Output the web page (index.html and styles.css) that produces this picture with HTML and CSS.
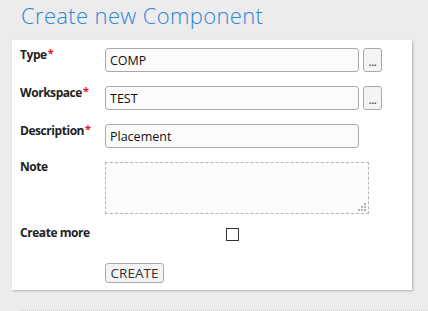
FILE: index.html
```html
<!DOCTYPE html>
<html>
<head>
<meta charset="utf-8">
<link rel="stylesheet" href="styles.css">
</head>
<body>
<h1 class="title">Create new Component</h1>
<div class="card">
  <form class="form">
    <label class="lbl">Type<span class="req">*</span></label>
    <div class="field">
      <input class="inp" type="text" value="COMP">
      <button type="button" class="dots">...</button>
    </div>
    <label class="lbl">Workspace<span class="req">*</span></label>
    <div class="field">
      <input class="inp" type="text" value="TEST">
      <button type="button" class="dots">...</button>
    </div>
    <label class="lbl">Description<span class="req">*</span></label>
    <div class="field">
      <input class="inp" type="text" value="Placement">
    </div>
    <label class="lbl">Note</label>
    <div class="field">
      <div class="note-wrap">
        <textarea class="note"></textarea>
        <svg class="grip" width="9" height="9" viewBox="0 0 9 9">
          <rect x="6" y="0" width="2" height="2" fill="#b5b5b5"/>
          <rect x="3" y="3" width="2" height="2" fill="#b5b5b5"/>
          <rect x="6" y="3" width="2" height="2" fill="#b5b5b5"/>
          <rect x="0" y="6" width="2" height="2" fill="#b5b5b5"/>
          <rect x="3" y="6" width="2" height="2" fill="#b5b5b5"/>
          <rect x="6" y="6" width="2" height="2" fill="#b5b5b5"/>
        </svg>
      </div>
    </div>
    <label class="lbl">Create more</label>
    <div class="field check-field">
      <span class="check"></span>
    </div>
    <div></div>
    <div class="field create-field">
      <button type="button" class="create">CREATE</button>
    </div>
  </form>
</div>
<div class="footer"></div>
</body>
</html>
```

FILE: styles.css
```css
html, body {
  margin: 0;
  padding: 0;
  background: #ececec;
  font-family: "Open Sans", "Noto Sans", sans-serif;
  color: #222;
}
.title {
  margin: 0;
  padding: 0 0 0 21px;
  height: 40px;
  font-size: 22px;
  font-weight: 300;
  letter-spacing: 0.35px;
  line-height: 30px;
  color: #2e86d4;
}
.card {
  margin-left: 12px;
  width: 400px;
  height: 250px;
  box-sizing: border-box;
  background: #fff;
  padding: 8px 0 0 8px;
  box-shadow: 1px 1px 2px rgba(0,0,0,0.25);
}
.form {
  display: grid;
  grid-template-columns: 85px 1fr;
  grid-template-rows: 24px 24px 24px 52px 13px 20px;
  row-gap: 14px;
  margin: 0;
}
.create-field {
  margin-top: 8px;
}
.lbl {
  font-size: 12px;
  font-weight: 700;
  letter-spacing: -0.45px;
  line-height: 16px;
  margin-top: -3px;
  color: #222;
  white-space: nowrap;
}
.req {
  color: #e8101c;
  font-size: 11px;
  vertical-align: 2px;
  margin-left: 1px;
}
.field {
  display: flex;
  gap: 4px;
  align-items: flex-start;
}
.inp {
  width: 254px;
  height: 24px;
  box-sizing: border-box;
  border: 1px solid #aaa;
  border-radius: 3px;
  background: #fbfbfb;
  padding: 0 4px;
  margin: 0;
  font-family: inherit;
  font-size: 12.5px;
  color: #111;
}
.dots {
  width: 19px;
  height: 24px;
  box-sizing: border-box;
  border: 1px solid #aaa;
  border-radius: 3px;
  background: #f4f4f4;
  padding: 4px 0 0;
  margin: 0;
  font-family: inherit;
  font-size: 12px;
  line-height: 12px;
  color: #333;
  letter-spacing: -0.5px;
}
.note-wrap {
  position: relative;
  width: 264px;
  height: 52px;
}
.note {
  display: block;
  width: 264px;
  height: 52px;
  box-sizing: border-box;
  border: 1px dashed #b5b5b5;
  background: #fcfcfc;
  margin: 0;
  padding: 2px 4px;
  resize: none;
  font-family: inherit;
}
.grip {
  position: absolute;
  right: 2px;
  bottom: 2px;
}
.check-field {
  width: 254px;
  justify-content: center;
}
.check {
  display: block;
  width: 13px;
  height: 13px;
  box-sizing: border-box;
  border: 1px solid #333;
  background: #fff;
}
.create {
  height: 20px;
  width: 59px;
  box-sizing: border-box;
  border: 1px solid #aaa;
  border-radius: 3px;
  background: #f3f3f3;
  padding: 0;
  margin: 0;
  font-family: inherit;
  font-size: 13.5px;
  line-height: 18px;
  color: #333;
}
.footer {
  margin: 20px 0 0 20px;
  height: 0;
  border-top: 1px dotted #d4d4d4;
}
```
